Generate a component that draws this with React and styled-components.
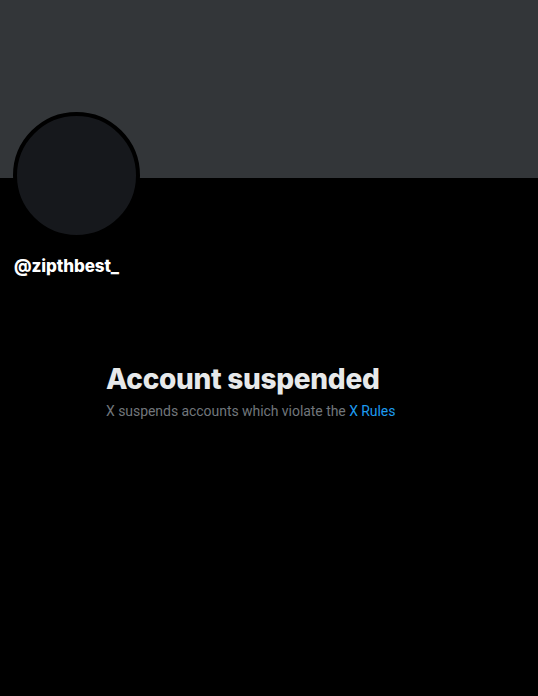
import React from "react";
import styled, { createGlobalStyle } from "styled-components";

const GlobalStyle = createGlobalStyle`
  html, body {
    margin: 0;
    padding: 0;
    background: #000;
  }
  body {
    font-family: Inter, "Noto Sans", "Liberation Sans", sans-serif;
    -webkit-font-smoothing: antialiased;
  }
`;

const Page = styled.div`
  width: 100%;
  min-height: 696px;
  background: #000;
  display: flex;
  flex-direction: column;
`;

const Banner = styled.div`
  height: 178px;
  background: #333639;
`;

const ProfileHead = styled.div`
  padding: 0 13px;
  display: flex;
  flex-direction: column;
  align-items: flex-start;
`;

const Avatar = styled.div`
  width: 119px;
  height: 119px;
  margin-top: -66px;
  border-radius: 50%;
  border: 4px solid #000;
  background: #16181c;
`;

const Handle = styled.div`
  margin-top: 17px;
  margin-left: 1px;
  color: #fff;
  font-size: 17px;
  font-weight: 800;
  line-height: 20px;
  letter-spacing: -0.1px;
`;

const EmptyState = styled.div`
  width: 326px;
  margin: 86px auto 0;
  display: flex;
  flex-direction: column;
`;

const Title = styled.h2`
  margin: 0;
  color: #e7e9ea;
  font-size: 28px;
  font-weight: 800;
  line-height: 34px;
  letter-spacing: -0.3px;
`;

const Subtitle = styled.p`
  margin: 5px 0 0;
  color: #71767b;
  font-family: Roboto, "Liberation Sans", sans-serif;
  font-size: 14px;
  line-height: 20px;
  letter-spacing: -0.05px;
`;

const RulesLink = styled.a`
  color: #1d9bf0;
  text-decoration: none;
`;

export default function App() {
  return (
    <>
      <GlobalStyle />
      <Page>
        <Banner />
        <ProfileHead>
          <Avatar />
          <Handle>@zipthbest_</Handle>
        </ProfileHead>
        <EmptyState>
          <Title>Account suspended</Title>
          <Subtitle>
            X suspends accounts which violate the <RulesLink href="#">X Rules</RulesLink>
          </Subtitle>
        </EmptyState>
      </Page>
    </>
  );
}
